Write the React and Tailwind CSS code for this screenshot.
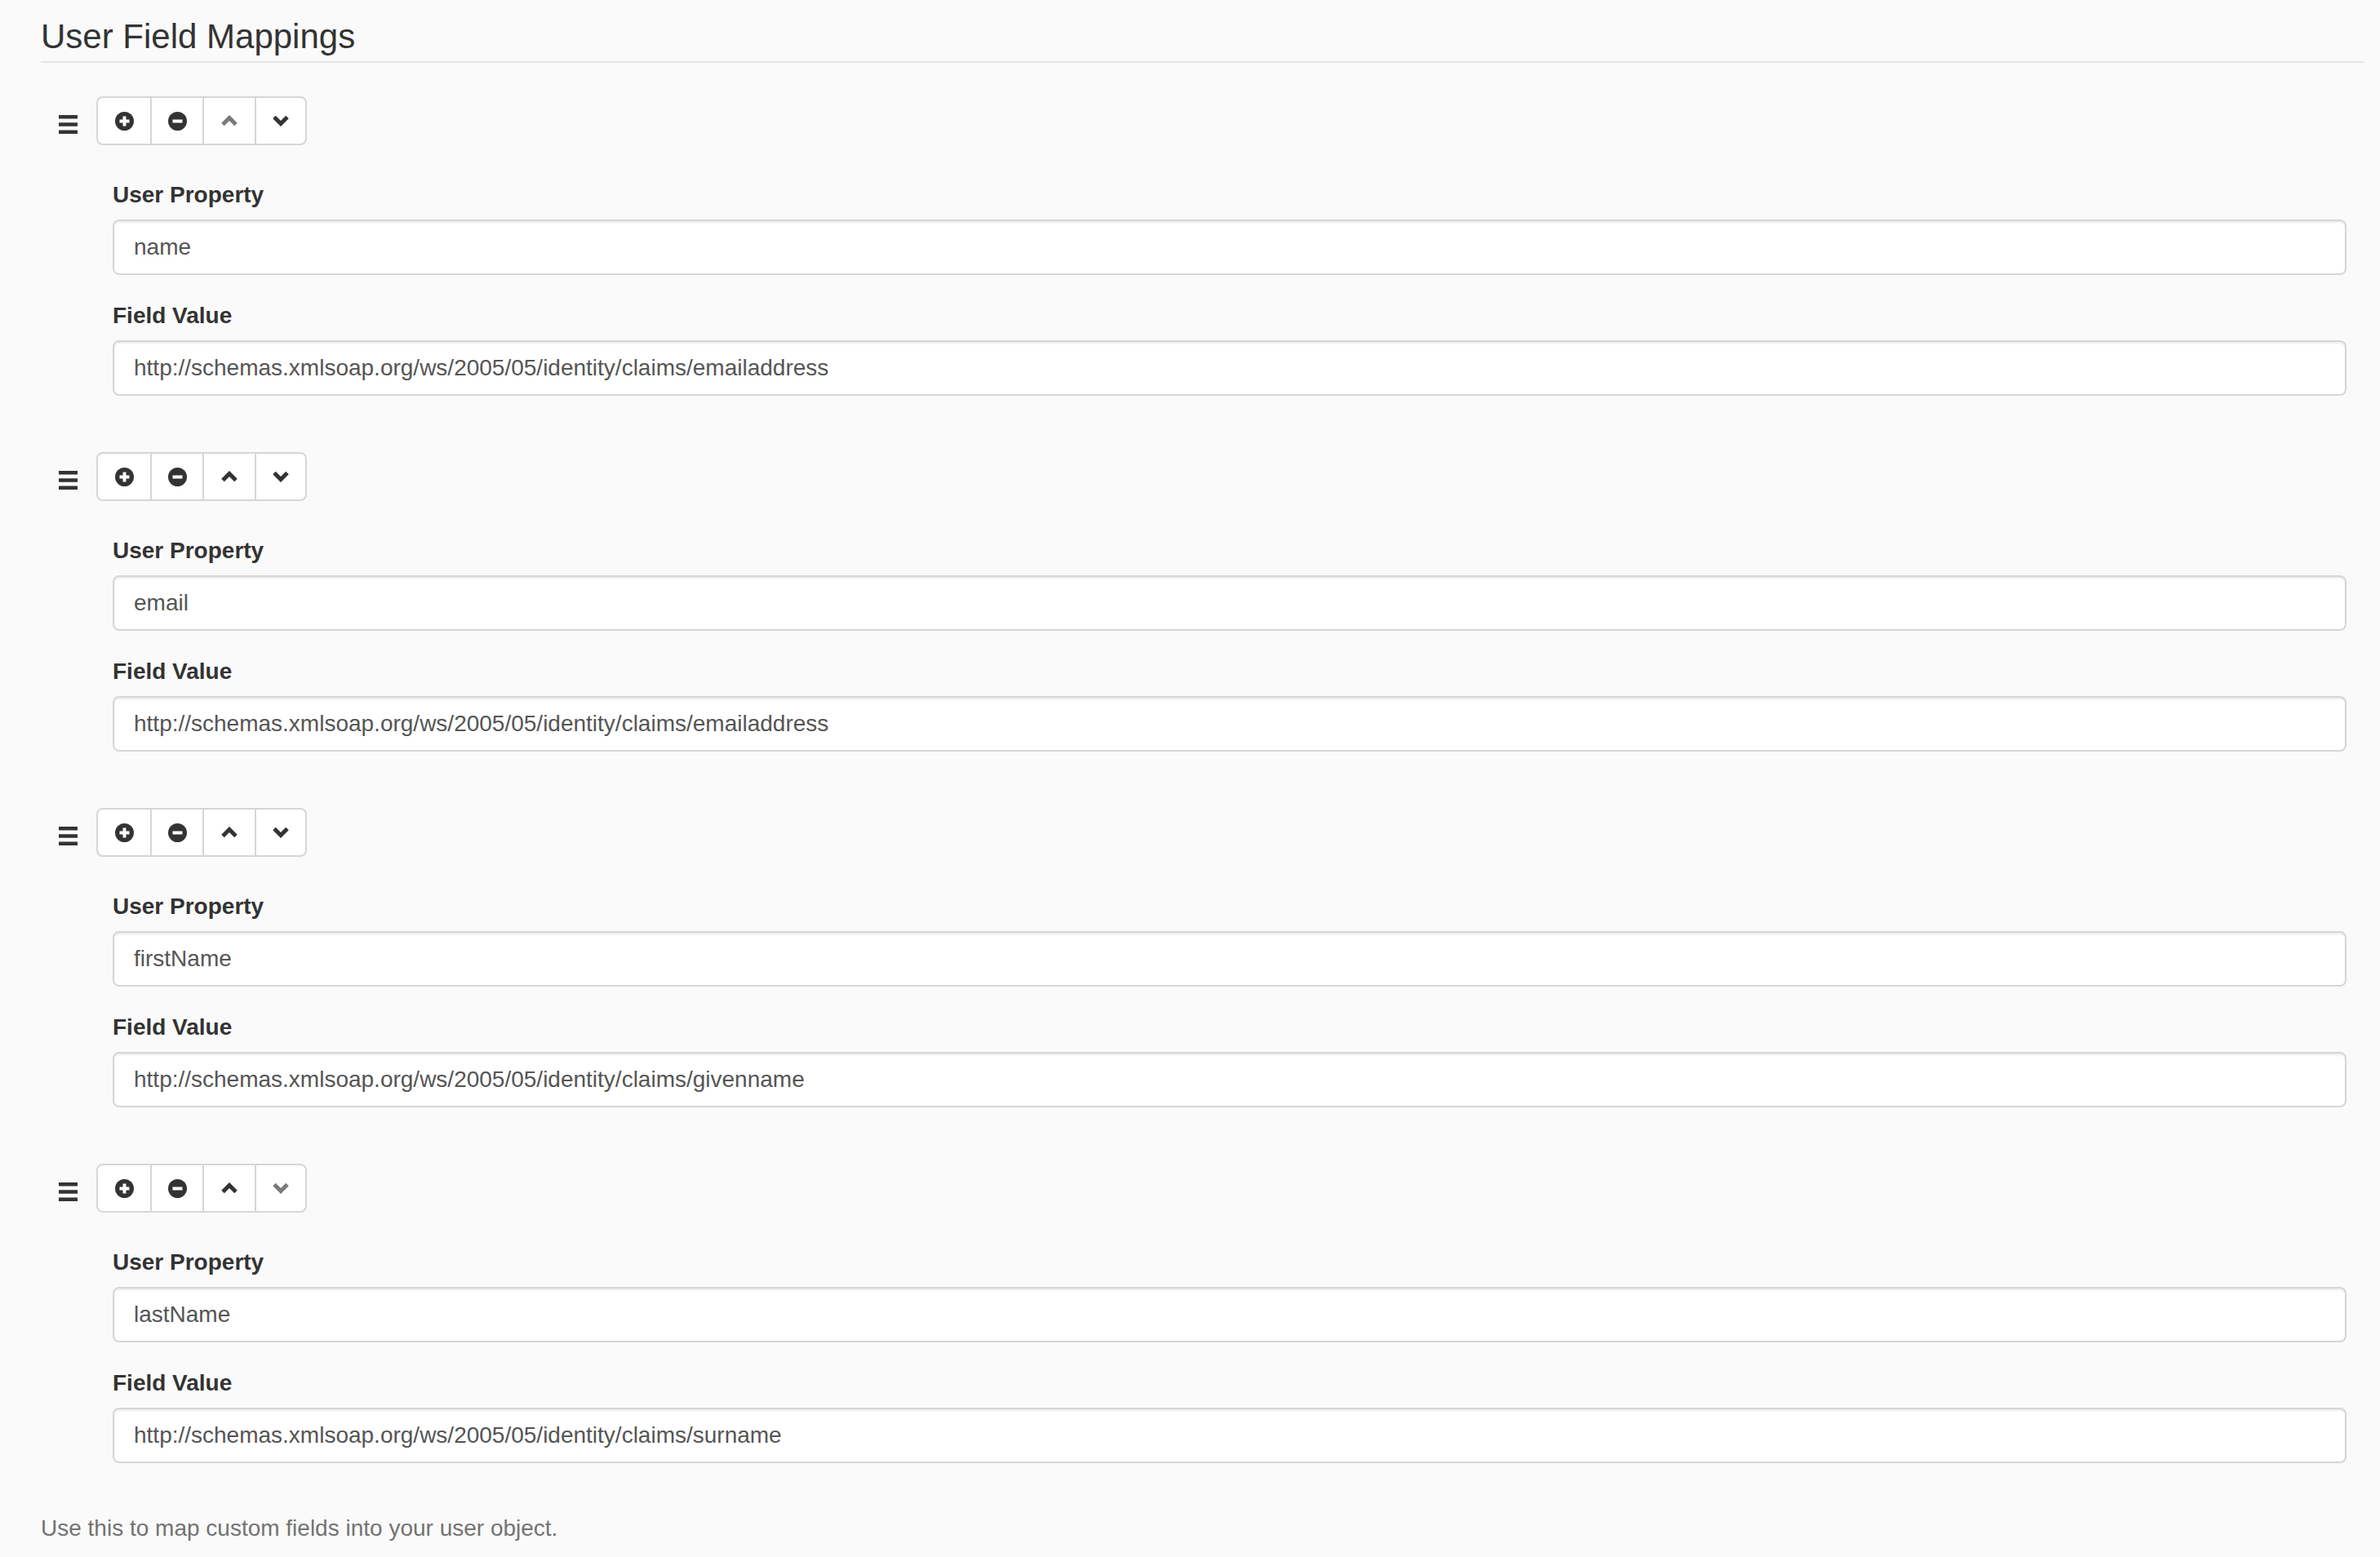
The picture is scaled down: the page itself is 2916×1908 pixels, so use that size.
const mappings = [
  { prop: "name", value: "http://schemas.xmlsoap.org/ws/2005/05/identity/claims/emailaddress" },
  { prop: "email", value: "http://schemas.xmlsoap.org/ws/2005/05/identity/claims/emailaddress" },
  { prop: "firstName", value: "http://schemas.xmlsoap.org/ws/2005/05/identity/claims/givenname" },
  { prop: "lastName", value: "http://schemas.xmlsoap.org/ws/2005/05/identity/claims/surname" },
];

const Bars = () => (
  <svg width="23" height="23" viewBox="0 0 23 23" className="mt-[23px] shrink-0">
    <rect x="0" y="0" width="23" height="4.5" fill="#333" />
    <rect x="0" y="9.25" width="23" height="4.5" fill="#333" />
    <rect x="0" y="18.5" width="23" height="4.5" fill="#333" />
  </svg>
);

const PlusCircle = () => (
  <svg width="23" height="23" viewBox="0 0 23 23">
    <circle cx="11.5" cy="11.5" r="11.5" fill="#333" />
    <rect x="5.5" y="9.5" width="12" height="4" fill="#fff" />
    <rect x="9.5" y="5.5" width="4" height="12" fill="#fff" />
  </svg>
);

const MinusCircle = () => (
  <svg width="23" height="23" viewBox="0 0 23 23">
    <circle cx="11.5" cy="11.5" r="11.5" fill="#333" />
    <rect x="5.5" y="9.5" width="12" height="4" fill="#fff" />
  </svg>
);

const Chevron = ({ up, disabled }) => (
  <svg width="22" height="14" viewBox="0 0 22 14">
    <polyline
      points={up ? "3,11.5 11,3.5 19,11.5" : "3,2.5 11,10.5 19,2.5"}
      fill="none"
      stroke={disabled ? "#7a7a7a" : "#333"}
      strokeWidth="5"
      strokeLinejoin="miter"
      strokeLinecap="butt"
    />
  </svg>
);

const Toolbar = ({ first, last }) => (
  <div className="flex h-[60px] border-2 border-[#d6d6d6] rounded-[8px] bg-white overflow-hidden">
    <button className="w-[64px] flex items-center justify-center">
      <PlusCircle />
    </button>
    <button className="w-[64px] flex items-center justify-center border-l-2 border-[#d6d6d6]">
      <MinusCircle />
    </button>
    <button className="w-[64px] flex items-center justify-center border-l-2 border-[#d6d6d6]">
      <Chevron up disabled={first} />
    </button>
    <button className="w-[62px] flex items-center justify-center border-l-2 border-[#d6d6d6]">
      <Chevron disabled={last} />
    </button>
  </div>
);

const Field = ({ label, value, className = "" }) => (
  <div className={className}>
    <label className="block h-[40px] leading-[40px] mb-[10px] text-[28px] font-bold text-[#333]">{label}</label>
    <input
      readOnly
      value={value}
      className="block w-full h-[68px] px-[24px] bg-white border-2 border-[#d6d6d6] rounded-[8px] text-[28px] text-[#555] shadow-[inset_0_2px_2px_rgba(0,0,0,0.075)] outline-none"
    />
  </div>
);

const Mapping = ({ prop, value, first, last }) => (
  <div className={last ? "" : "mb-[69px]"}>
    <div className="flex items-start pl-[22px] gap-[23px]">
      <Bars />
      <Toolbar first={first} last={last} />
    </div>
    <div className="ml-[88px] mr-[21px] mt-[41px]">
      <Field label="User Property" value={prop} className="mb-[30px]" />
      <Field label="Field Value" value={value} />
    </div>
  </div>
);

export default function App() {
  return (
    <div className="min-h-screen w-full bg-[#fafafa] font-['Liberation_Sans',Arial,sans-serif]">
      <div className="pl-[50px] pr-[20px] pt-[15px] pb-[20px]">
        <h2 className="h-[62px] leading-[60px] text-[42px] font-normal text-[#333] border-b-2 border-[#e5e5e5] mb-[41px]">
          User Field Mappings
        </h2>
        {mappings.map((m, i) => (
          <Mapping key={i} {...m} first={i === 0} last={i === mappings.length - 1} />
        ))}
        <p className="mt-[60px] leading-[40px] text-[28px] text-[#737373]">Use this to map custom fields into your user object.</p>
      </div>
    </div>
  );
}
